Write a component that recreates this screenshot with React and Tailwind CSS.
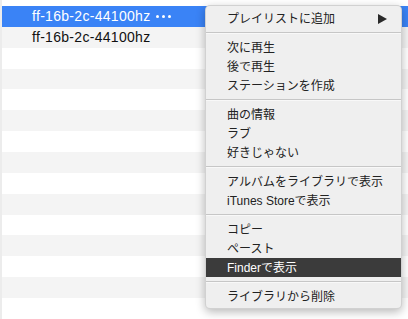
import React from "react";

const font = { fontFamily: '"Liberation Sans", "Noto Sans CJK JP", sans-serif' };

function Row({ kind, children }) {
  const bg =
    kind === "sel" ? "bg-[#3a83f6] text-white" : kind === "gray" ? "bg-[#f4f4f4]" : "bg-white";
  return (
    <div className={`h-[22px] flex items-center pl-[30px] text-[14px] tracking-[0.3px] leading-none ${bg}`}>
      {children}
    </div>
  );
}

function Item({ children, active, arrow }) {
  return (
    <div
      className={`h-[19px] flex items-center pl-[21px] pr-[14px] text-[12px] leading-none ${
        active ? "bg-[#3b3b3b] text-white" : "text-[#222]"
      }`}
    >
      <span className="flex-1">{children}</span>
      {arrow && (
        <svg width="9" height="10" viewBox="0 0 9 10" className="mt-[1px]">
          <path d="M0 0 L9 5 L0 10 Z" fill="#2a2a2a" />
        </svg>
      )}
    </div>
  );
}

function Sep() {
  return (
    <div className="h-[10px] flex flex-col justify-center">
      <div className="h-[1px] bg-[#c6c6c6]" />
      <div className="h-[1px] bg-[#f8f8f8]" />
    </div>
  );
}

export default function App() {
  const rows = [];
  for (let i = 0; i < 14; i++) {
    rows.push(i % 2 === 0 ? "gray" : "white");
  }
  return (
    <div className="relative w-[408px] h-[319px] bg-white overflow-hidden" style={font}>
      <div className="flex h-full">
        <div className="w-[2px] bg-[#ececec]" />
        <div className="flex-1 flex flex-col pt-[6px]">
          <Row kind="sel">
            <span>ff-16b-2c-44100hz</span>
            <span className="ml-[6px] flex gap-[3px] items-center">
              <span className="w-[3px] h-[3px] rounded-full bg-white" />
              <span className="w-[3px] h-[3px] rounded-full bg-white" />
              <span className="w-[3px] h-[3px] rounded-full bg-white" />
            </span>
          </Row>
          <Row kind="gray">
            <span className="text-[#111]">ff-16b-2c-44100hz</span>
          </Row>
          {rows.slice(1).map((k, i) => (
            <Row key={i} kind={k} />
          ))}
        </div>
      </div>

      <div className="absolute left-[205px] top-[5px] w-[197px] bg-[#efefef] rounded-[5px] border border-[#c4c4c4]/70 shadow-[0_3px_10px_rgba(0,0,0,0.28)] pt-[3px] pb-[2px] overflow-hidden">
        <Item arrow>プレイリストに追加</Item>
        <Sep />
        <Item>次に再生</Item>
        <Item>後で再生</Item>
        <Item>ステーションを作成</Item>
        <Sep />
        <Item>曲の情報</Item>
        <Item>ラブ</Item>
        <Item>好きじゃない</Item>
        <Sep />
        <Item>アルバムをライブラリで表示</Item>
        <Item>iTunes Storeで表示</Item>
        <Sep />
        <Item>コピー</Item>
        <Item>ペースト</Item>
        <Item active>Finderで表示</Item>
        <Sep />
        <Item>ライブラリから削除</Item>
      </div>
    </div>
  );
}
